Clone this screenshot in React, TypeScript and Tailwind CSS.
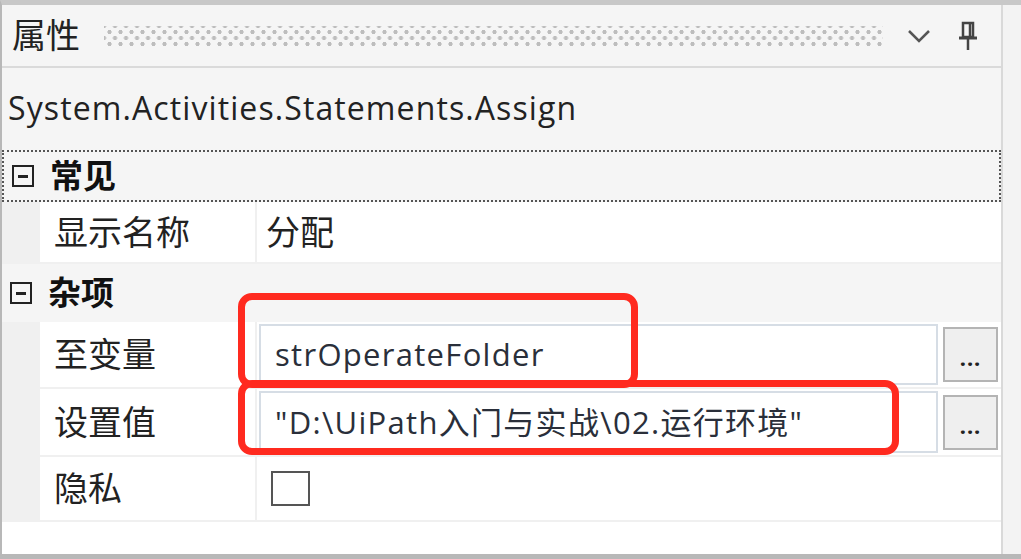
import React from 'react';

const cjk = "font-['Open_Sans','Noto_Sans_CJK_SC',sans-serif]";

const PinIcon = () => (
  <svg width="22" height="30" viewBox="0 0 22 30" fill="none">
    <path d="M6 2 H16 V16 H6 Z" stroke="#444" strokeWidth="2.5" fill="none" />
    <path d="M13 3 V15" stroke="#444" strokeWidth="2.5" />
    <path d="M2 17 H20" stroke="#444" strokeWidth="3" />
    <path d="M11 18 V29" stroke="#444" strokeWidth="2.5" />
  </svg>
);

const Chevron = () => (
  <svg width="24" height="14" viewBox="0 0 24 14" fill="none">
    <path d="M2 2 L12 12 L22 2" stroke="#555" strokeWidth="2.5" />
  </svg>
);

const ToggleBox = () => (
  <div className="w-[22px] h-[22px] border-2 border-[#222] flex items-center justify-center bg-[#f5f5f5]">
    <div className="w-[10px] h-[3px] bg-[#222]" />
  </div>
);

const Category = ({ label, focused }: { label: string; focused?: boolean }) => (
  <div
    className={
      'flex items-center bg-[#f5f5f5] ' +
      (focused ? 'h-[52px] border-2 border-dotted border-[#555]' : 'h-[58px]')
    }
  >
    <div className="w-[38px] flex justify-center">
      <ToggleBox />
    </div>
    <span className={`ml-[8px] text-[33px] font-bold text-[#111] ${cjk}`}>{label}</span>
  </div>
);

const PropRow = ({ name, h, children }: { name: string; h: string; children: React.ReactNode }) => (
  <div className={`flex ${h}`}>
    <div className="w-[38px] bg-[#f0f0f0]" />
    <div className="w-[215px] bg-white border-b-2 border-[#f0f0f0] flex items-center pl-[14px]">
      <span className={`text-[34px] text-[#222] ${cjk}`}>{name}</span>
    </div>
    <div className="flex-1 bg-white border-b-2 border-l-2 border-[#f0f0f0] flex items-center">{children}</div>
  </div>
);

const EditField = ({ text }: { text: string }) => (
  <div className="flex items-center w-full h-full pl-[2px] pr-[3px] py-[2px] gap-[5px]">
    <div className="flex-1 h-full border-2 border-[#d6dde5] bg-white flex items-center pl-[14px]">
      <span className={`text-[31px] tracking-[1.3px] text-[#2a2f3a] whitespace-nowrap ${cjk}`}>{text}</span>
    </div>
    <div className="w-[55px] h-[55px] border-2 border-[#b4b4b4] bg-[#efefef] flex items-end justify-center pb-[12px]">
      <span className="text-[22px] leading-none font-bold text-[#222] tracking-[1px]">...</span>
    </div>
  </div>
);

export default function App() {
  return (
    <div className="w-[1021px] h-[559px] bg-[#f0f0f0] border-t-[5px] border-t-[#c8c8c8] border-l-2 border-l-[#b8b8b8] border-b-[5px] border-b-[#b8b8b8] flex overflow-hidden">
      <div className="w-[1001px] flex flex-col border-r-2 border-[#d9d9d9] bg-white relative">
        <div className="h-[63px] bg-[#f5f5f5] border-b-2 border-[#dadada] flex items-center pl-[10px] pr-[22px]">
          <span className={`text-[34px] text-[#222] ${cjk}`}>属性</span>
          <div className="flex-1 mx-[24px] h-[20px] bg-[radial-gradient(circle,#bdbdbd_1.8px,transparent_2.4px),radial-gradient(circle,#bdbdbd_1.8px,transparent_2.4px)] bg-[length:11px_12px,11px_12px] bg-[position:0_0,5.5px_6px]" />
          <div className="flex items-center gap-[26px]">
            <Chevron />
            <PinIcon />
          </div>
        </div>
        <div className="h-[80px] bg-[#f5f5f5] flex items-center pl-[6px]">
          <span className="text-[32px] text-[#222] font-['Open_Sans',sans-serif] tracking-[1.1px]">
            System.Activities.Statements.Assign
          </span>
        </div>
        <div className="h-[2px] bg-[#f5f5f5]" />
        <Category label="常见" focused />
        <PropRow name="显示名称" h="h-[62px]">
          <span className={`pl-[9px] text-[34px] text-[#222] ${cjk}`}>分配</span>
        </PropRow>
        <Category label="杂项" />
        <PropRow name="至变量" h="h-[67px]">
          <EditField text="strOperateFolder" />
        </PropRow>
        <PropRow name="设置值" h="h-[68px]">
          <EditField text={'"D:\\UiPath入门与实战\\02.运行环境"'} />
        </PropRow>
        <PropRow name="隐私" h="h-[65px]">
          <div className="ml-[14px] w-[39px] h-[35px] border-2 border-[#555] bg-white" />
        </PropRow>
        <div className="flex-1 bg-white" />

        <div className="absolute left-[236px] top-[288px] w-[400px] h-[95px] border-[7px] border-[#ff2a1f] rounded-[14px]" />
        <div className="absolute left-[236px] top-[375px] w-[661px] h-[75px] border-[7px] border-[#ff2a1f] rounded-[14px]" />
      </div>
      <div className="flex-1 bg-[#f3f3f3]" />
    </div>
  );
}
